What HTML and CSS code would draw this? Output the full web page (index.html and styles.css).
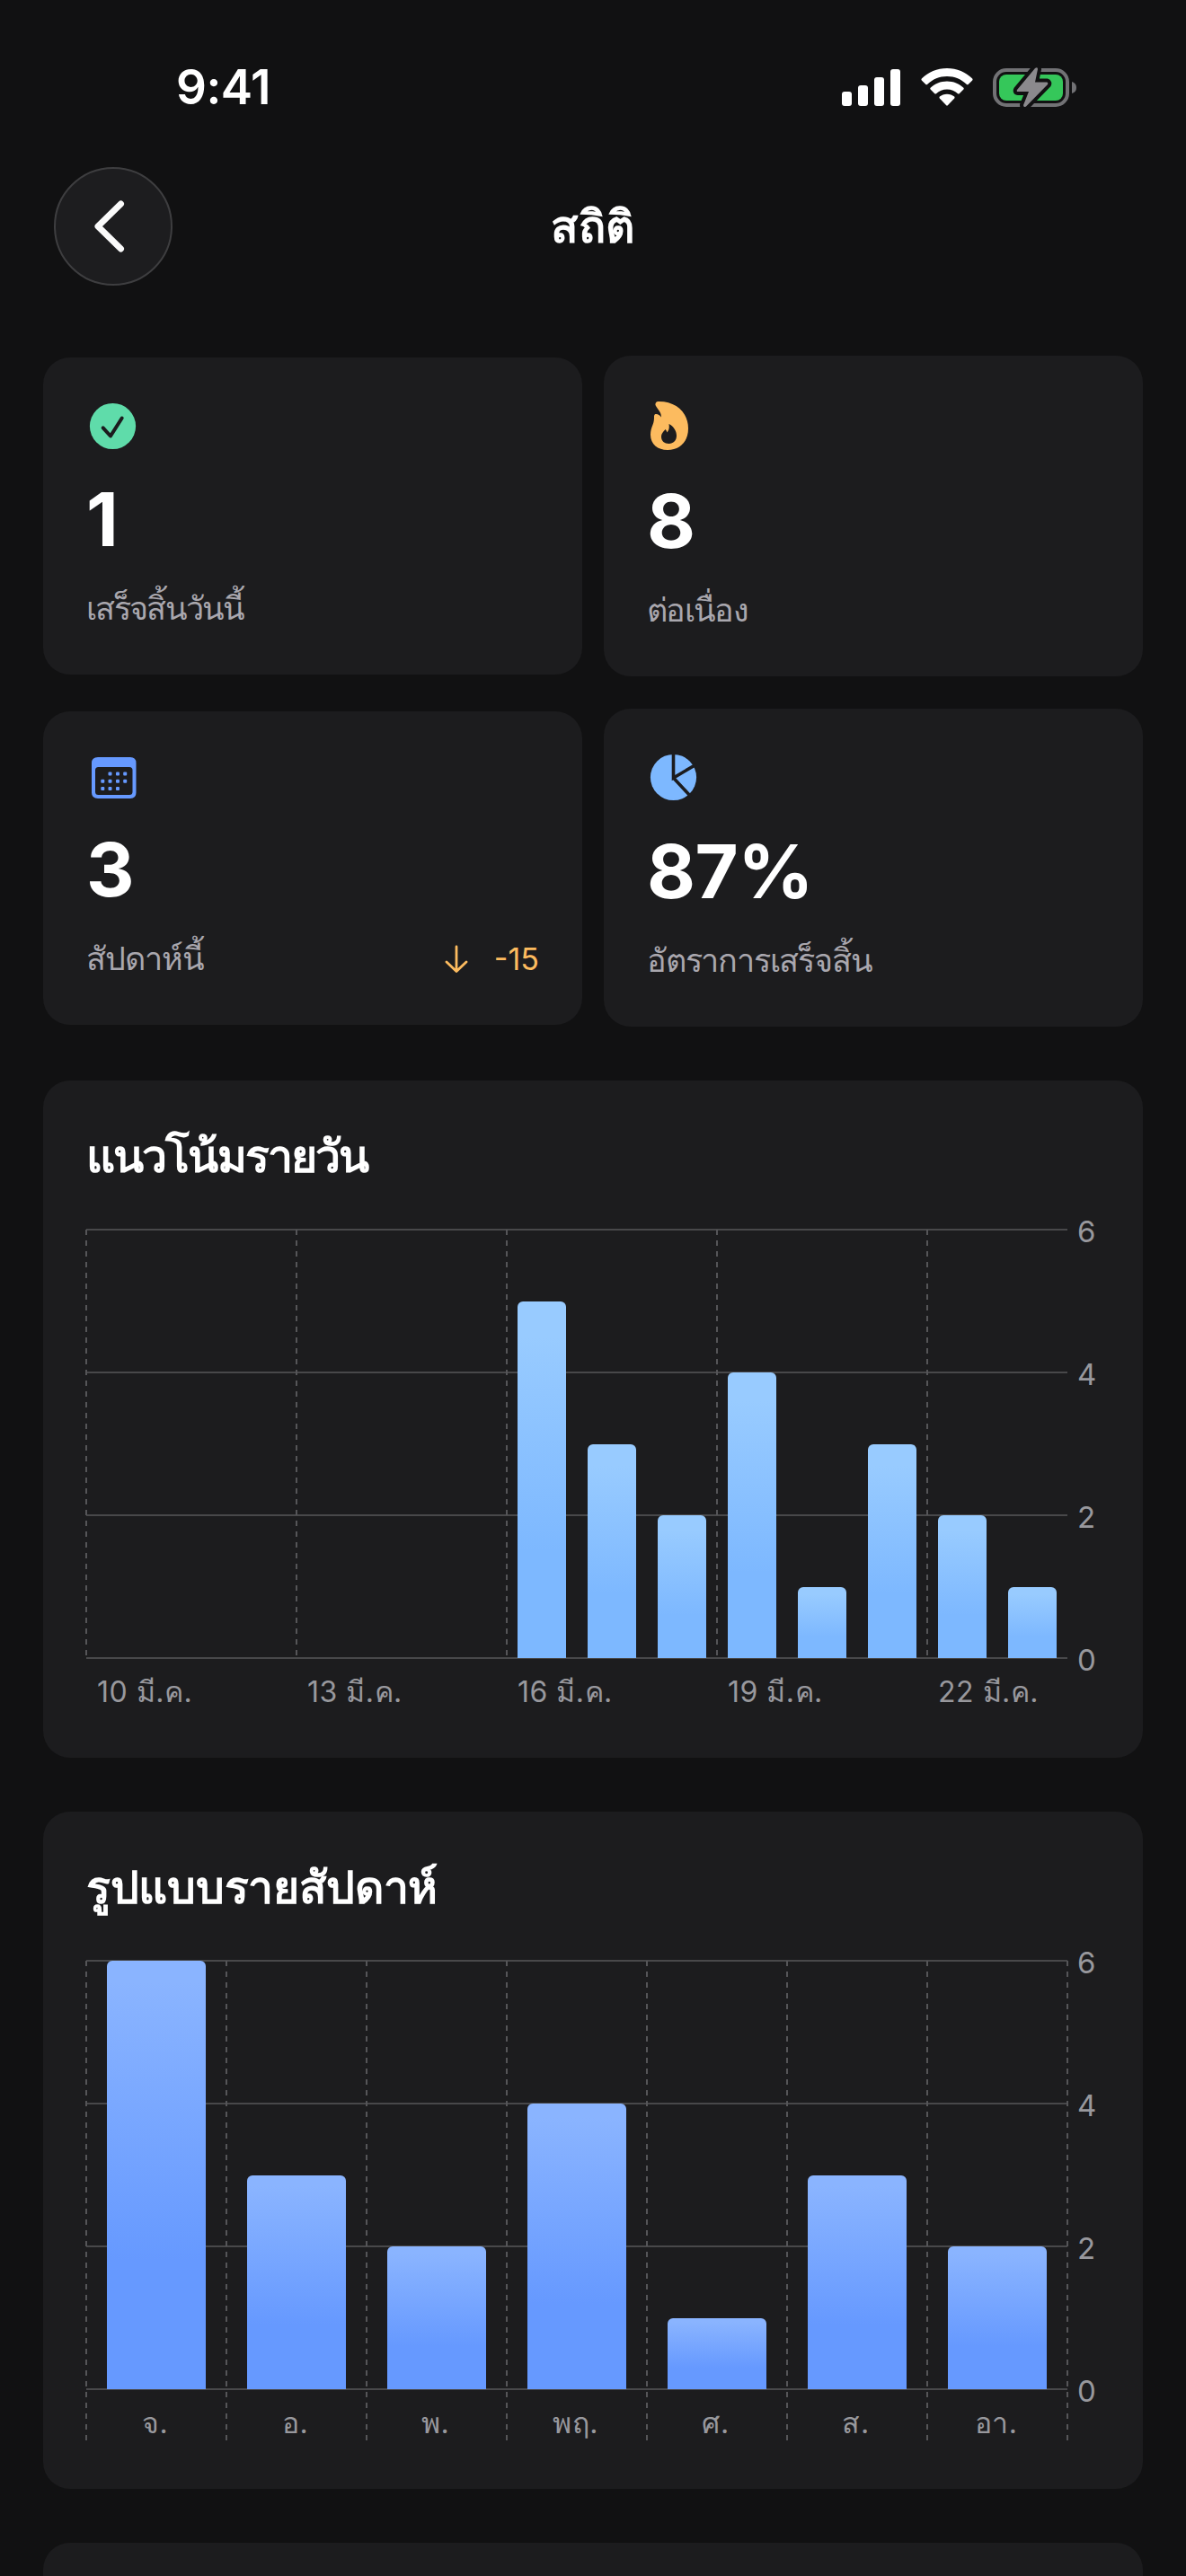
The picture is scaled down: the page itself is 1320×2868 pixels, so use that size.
FILE: index.html
```html
<!DOCTYPE html>
<html lang="th">

<head>
    <meta charset="UTF-8">
    <meta name="viewport" content="width=device-width, initial-scale=1.0">
    <title>สถิติ</title>
    <link rel="stylesheet" href="styles.css">
</head>

<body>
    <div class="screen">
        <div class="status-bar">
            <div class="time">9:41</div>
            <div class="status-icons">
                <svg class="signal" width="65" height="41" viewBox="0 0 65 41" fill="#fff">
                    <rect x="0" y="25" width="11" height="16" rx="3"/>
                    <rect x="18" y="18" width="11" height="23" rx="3"/>
                    <rect x="36" y="9" width="11" height="32" rx="3"/>
                    <rect x="54" y="0" width="11" height="41" rx="3"/>
                </svg>
                <svg class="wifi" width="58" height="42" viewBox="0 0 58 42" fill="#fff">
                    <path d="M29 0C40 0 50 4.300 57.200 11.500Q58 12.500 57.200 13.400L52.600 18Q51.800 18.700 51 18C45 12.200 37.500 9 29 9S13 12.200 7 18Q6.200 18.700 5.400 18L.8 13.400Q0 12.500.8 11.500C8 4.300 18 0 29 0Z"/>
                    <path d="M29 14.500C36.200 14.500 42.700 17.300 47.400 21.800Q48.200 22.700 47.400 23.500L42.700 28.200Q41.900 28.900 41 28.200C37.800 25.200 33.600 23.500 29 23.500S20.200 25.200 17 28.200Q16.100 28.900 15.300 28.200L10.600 23.500Q9.800 22.700 10.600 21.800C15.300 17.300 21.800 14.500 29 14.500Z"/>
                    <path d="M29 28.700C32.200 28.700 35 29.800 37.200 31.600Q38 32.500 37.200 33.400L29.800 41.300Q29 42 28.200 41.300L20.800 33.400Q20 32.500 20.800 31.600C23 29.800 25.800 28.700 29 28.700Z"/>
                </svg>
                <svg class="battery" width="94" height="47" viewBox="0 0 94 47">
                    <rect x="2" y="4" width="81" height="39" rx="13" fill="none" stroke="#727275" stroke-width="4"/>
                    <rect x="7" y="9" width="71" height="29" rx="8" fill="#35c75a"/>
                    <path d="M88 17Q93 18.500 93 23.500T88 30Z" fill="#727275"/>
                    <path d="M47 2L27 26Q26 28 28 28H40L34 43Q34 46 37 44.500L61 20Q62 18 60 17.500H47L50 3Q50 0 47 2Z" fill="#8b898d" stroke="#111112" stroke-width="8" paint-order="stroke"/>
                </svg>
            </div>
        </div>

        <div class="nav">
            <button class="back-button">
                <svg width="34" height="58" viewBox="0 0 34 58" fill="none" stroke="#fafafa" stroke-width="7" stroke-linecap="round" stroke-linejoin="round">
                    <path d="M29.500 4L4 29L29.500 54"/>
                </svg>
            </button>
            <div class="nav-title">สถิติ</div>
        </div>

        <div class="stats">
            <div class="card stat">
                <svg class="stat-icon" width="57" height="56" viewBox="0 0 57 56">
                    <circle cx="29.500" cy="28.500" r="25.600" fill="#5fdcaa"/>
                    <path d="M18.700 30.300L27 39.500L39.700 19.500" fill="none" stroke="#1c1c1e" stroke-width="4" stroke-linecap="round" stroke-linejoin="round"/>
                </svg>
                <div class="value">1</div>
                <div class="stat-row">
                    <div class="label label-done">เสร็จสิ้นวันนี้</div>
                </div>
            </div>
            <div class="card stat">
                <svg class="stat-icon" width="50" height="60" viewBox="0 0 50 60">
                    <path d="M12.500 3Q9 3.500 9.500 7C11.500 11.500 16.500 15 15.800 20.500C14.500 18.500 12.500 17 10.300 17C8 17 8 19 8 21C8 29 4 31.500 4 40C4 50.500 12 57 23 57C37 57 46 47.500 46 33C46 15 32 2.500 12.500 3ZM24.500 28C29.500 30.500 33 35.500 33 41C33 46.500 29.500 50 24.500 50S16 47 16 42.500C16 38.500 18.500 36.500 20.500 34C21.500 34.700 22 36 22.500 37.500C25 34.500 25 31.500 24.500 28Z" fill="#fcbb5f" fill-rule="evenodd"/>
                </svg>
                <div class="value">8</div>
                <div class="stat-row">
                    <div class="label label-streak">ต่อเนื่อง</div>
                </div>
            </div>
            <div class="card stat">
                <svg class="stat-icon" width="60" height="52" viewBox="0 0 60 52">
                    <path d="M13 3H49Q55.500 3 55.500 9.500V42.500Q55.500 49 49 49H13Q6 49 6 42.500V9.500Q6 3 13 3ZM13.500 14Q10 14 10 17.500V41.500Q10 45 13.500 45H48Q51.500 45 51.500 41.500V17.500Q51.500 14 48 14Z" fill="#6699ff" fill-rule="evenodd"/>
                    <g fill="#6699ff">
                        <rect x="24.500" y="19.500" width="4" height="4" rx="1"/>
                        <rect x="33" y="19.500" width="4" height="4" rx="1"/>
                        <rect x="41.200" y="19.500" width="4" height="4" rx="1"/>
                        <rect x="16.300" y="27.700" width="4" height="4" rx="1"/>
                        <rect x="24.500" y="27.700" width="4" height="4" rx="1"/>
                        <rect x="33" y="27.700" width="4" height="4" rx="1"/>
                        <rect x="41.200" y="27.700" width="4" height="4" rx="1"/>
                        <rect x="16.300" y="36" width="4" height="4" rx="1"/>
                        <rect x="24.500" y="36" width="4" height="4" rx="1"/>
                        <rect x="33" y="36" width="4" height="4" rx="1"/>
                    </g>
                </svg>
                <div class="value">3</div>
                <div class="stat-row">
                    <div class="label label-week">สัปดาห์นี้</div>
                    <div class="trend">
                        <svg width="26" height="32" viewBox="0 0 26 32" fill="none" stroke="#fcbb5f" stroke-width="2.800" stroke-linecap="round" stroke-linejoin="round">
                            <path d="M13 2V29.500M2 19L13 29.500L24 19"/>
                        </svg>
                        <span>-15</span>
                    </div>
                </div>
            </div>
            <div class="card stat">
                <svg class="stat-icon" width="57" height="57" viewBox="0 0 57 57">
                    <circle cx="29.500" cy="28.500" r="25.600" fill="#7db8ff"/>
                    <path d="M29.500 0V29L55 14M29.500 29L49 50" fill="none" stroke="#1c1c1e" stroke-width="3.600"/>
                </svg>
                <div class="value">87%</div>
                <div class="stat-row">
                    <div class="label label-rate">อัตราการเสร็จสิ้น</div>
                </div>
            </div>
        </div>

        <div class="card chart-card daily">
            <div class="chart-title">แนวโน้มรายวัน</div>
            <div class="chart">
                <div class="plot">
                    <div class="slot">
                        <div class="bars"></div>
                        <div class="tick">10 มี.ค.</div>
                    </div>
                    <div class="slot">
                        <div class="bars"></div>
                        <div class="tick">13 มี.ค.</div>
                    </div>
                    <div class="slot">
                        <div class="bars">
                            <div class="bar" style="height: 397.5px"></div>
                            <div class="bar" style="height: 238.5px"></div>
                            <div class="bar" style="height: 159px"></div>
                        </div>
                        <div class="tick">16 มี.ค.</div>
                    </div>
                    <div class="slot">
                        <div class="bars">
                            <div class="bar" style="height: 318px"></div>
                            <div class="bar" style="height: 79.5px"></div>
                            <div class="bar" style="height: 238.5px"></div>
                        </div>
                        <div class="tick">19 มี.ค.</div>
                    </div>
                    <div class="slot">
                        <div class="bars">
                            <div class="bar" style="height: 159px"></div>
                            <div class="bar" style="height: 79.5px"></div>
                        </div>
                        <div class="tick">22 มี.ค.</div>
                    </div>
                </div>
                <div class="y-axis">
                    <span>6</span>
                    <span>4</span>
                    <span>2</span>
                    <span>0</span>
                </div>
            </div>
        </div>

        <div class="card chart-card weekly">
            <div class="chart-title">รูปแบบรายสัปดาห์</div>
            <div class="chart">
                <div class="plot">
                    <div class="slot">
                        <div class="bars"><div class="bar" style="height: 477px"></div></div>
                        <div class="tick">จ.</div>
                    </div>
                    <div class="slot">
                        <div class="bars"><div class="bar" style="height: 238.5px"></div></div>
                        <div class="tick">อ.</div>
                    </div>
                    <div class="slot">
                        <div class="bars"><div class="bar" style="height: 159px"></div></div>
                        <div class="tick">พ.</div>
                    </div>
                    <div class="slot">
                        <div class="bars"><div class="bar" style="height: 318px"></div></div>
                        <div class="tick">พฤ.</div>
                    </div>
                    <div class="slot">
                        <div class="bars"><div class="bar" style="height: 79.5px"></div></div>
                        <div class="tick">ศ.</div>
                    </div>
                    <div class="slot">
                        <div class="bars"><div class="bar" style="height: 238.5px"></div></div>
                        <div class="tick">ส.</div>
                    </div>
                    <div class="slot">
                        <div class="bars"><div class="bar" style="height: 159px"></div></div>
                        <div class="tick">อา.</div>
                    </div>
                    <div class="slot slot-end"></div>
                </div>
                <div class="y-axis">
                    <span>6</span>
                    <span>4</span>
                    <span>2</span>
                    <span>0</span>
                </div>
            </div>
        </div>

        <div class="card chart-card"></div>
    </div>
</body>

</html>
```
FILE: styles.css
```css
* {
    box-sizing: border-box;
}

body {
    margin: 0;
    background: #111112;
    color: #fff;
    font-family: Inter, "Noto Sans", sans-serif;
}

.screen {
    width: 1320px;
    height: 2868px;
    overflow: hidden;
}

/* Status bar */
.status-bar {
    height: 186px;
    padding: 8px 121px 0 196px;
    display: flex;
    justify-content: space-between;
    align-items: center;
}

.time {
    font-size: 53px;
    font-weight: 600;
    letter-spacing: -0.5px;
}

.status-icons {
    display: flex;
    align-items: center;
}

.wifi {
    margin-left: 23px;
}

.battery {
    margin-left: 22px;
}

/* Navigation */
.nav {
    height: 132px;
    margin-bottom: 78px;
    padding: 0 60px;
    display: flex;
    align-items: center;
}

.back-button {
    width: 132px;
    height: 132px;
    padding: 0 9px 0 0;
    border: 2px solid #3e3e40;
    border-radius: 50%;
    background: #1d1d1f;
    display: flex;
    align-items: center;
    justify-content: center;
}

.nav-title {
    flex: 1;
    padding-right: 134px;
    text-align: center;
    font-size: 50px;
    font-weight: 600;
    line-height: 70px;
}

/* Cards */
.card {
    background: #1c1c1e;
    border-radius: 30px;
}

.stats {
    padding: 0 48px;
    display: grid;
    grid-template-columns: 600px 600px;
    gap: 36px 24px;
    align-items: center;
}

.stat {
    padding: 48px;
    display: flex;
    flex-direction: column;
}

.stat-icon {
    flex: none;
}

.value {
    margin-top: 26px;
    height: 101px;
    line-height: 101px;
    font-size: 83px;
    font-weight: 700;
    letter-spacing: -0.5px;
}

.stat-row {
    margin-top: 24px;
    height: 50px;
    display: flex;
    justify-content: space-between;
}

.label {
    font-size: 36px;
    line-height: 48px;
    color: #a9a7ae;
    white-space: nowrap;
}

.label-done,
.label-streak {
    letter-spacing: -1.7px;
}

.label-week {
    letter-spacing: -1px;
}

.label-rate {
    letter-spacing: -1.2px;
}

.trend {
    display: flex;
    align-items: center;
    gap: 29px;
    font-size: 34px;
    line-height: 48px;
    color: #fcbb5f;
}

/* Charts */
.chart-card {
    height: 754px;
    margin: 60px 48px 0;
    padding: 48px 48px 0 47px;
}

.chart-title {
    height: 117px;
    padding-left: 1px;
    font-size: 50px;
    font-weight: 600;
    line-height: 73px;
    white-space: nowrap;
}

.daily .chart-title {
    letter-spacing: -1.9px;
}

.weekly .chart-title {
    letter-spacing: -0.3px;
}

.chart {
    display: flex;
}

.plot {
    width: 1094px;
    height: 541px;
    display: flex;
    background: repeating-linear-gradient(to bottom, #48484a 0, #48484a 2px, transparent 2px, transparent 159px) 1px 0 / 1092px 100% no-repeat;
}

.slot {
    flex: none;
    padding-left: 1px;
    background: repeating-linear-gradient(to bottom, #555558 0, #555558 6px, transparent 6px, transparent 12px) 0 1px / 2px 100% no-repeat;
}

.daily .slot {
    width: 234px;
    background-size: 2px 477px;
}

.weekly .slot {
    width: 156px;
}

.weekly .slot-end {
    width: 2px;
}

.bars {
    height: 478px;
    display: flex;
    align-items: flex-end;
}

.bar {
    flex: none;
    border-radius: 6px 6px 0 0;
}

.daily .bar {
    width: 54px;
    margin: 0 12px;
    background: linear-gradient(#98cbff 10%, #7db8ff 70%);
}

.weekly .bar {
    width: 109.2px;
    margin: 0 23.4px;
    background: linear-gradient(#8ab4ff 5%, #6699ff 70%);
}

.tick {
    font-size: 32px;
    line-height: 50px;
    padding-top: 13px;
    color: #98989d;
    letter-spacing: 0.5px;
    white-space: nowrap;
}

.daily .tick {
    padding-left: 12px;
}

.weekly .tick {
    padding-right: 2px;
    text-align: center;
}

.y-axis {
    height: 517px;
    margin: -17px 0 0 10px;
    display: flex;
    flex-direction: column;
    justify-content: space-between;
    font-size: 33px;
    line-height: 40px;
    color: #98989d;
}
```
